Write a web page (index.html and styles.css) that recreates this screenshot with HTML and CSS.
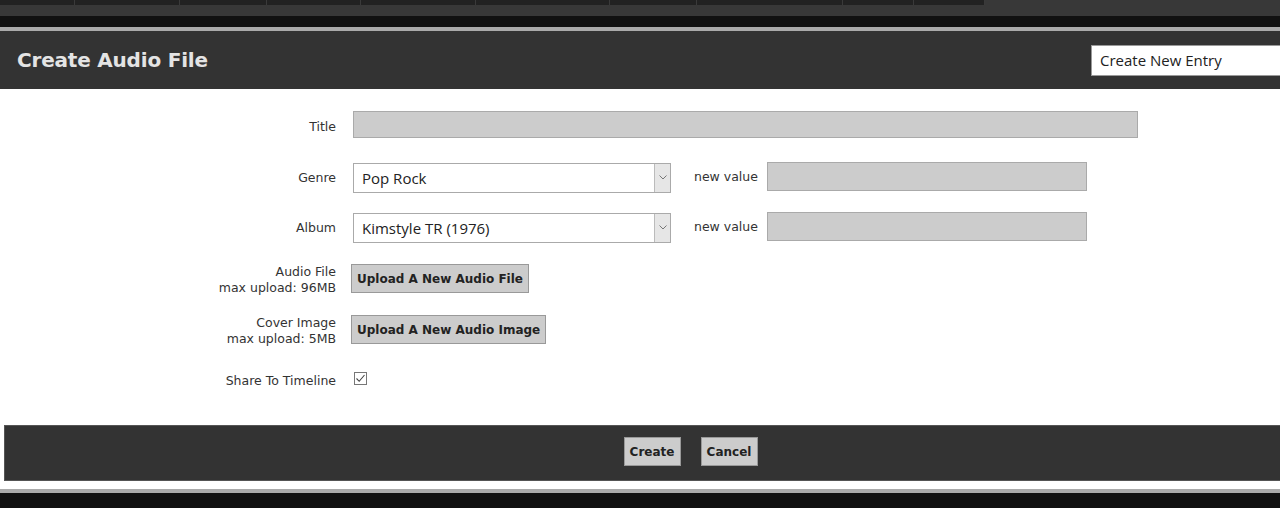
FILE: index.html
```html
<!DOCTYPE html>
<html lang="en">
<head>
    <meta charset="UTF-8">
    <title>Create Audio File</title>
    <link rel="stylesheet" href="styles.css">
</head>
<body>
    <div class="topnav">
        <div class="tabs">
            <span style="width:75px"></span>
            <span style="width:105px"></span>
            <span style="width:87px"></span>
            <span style="width:94px"></span>
            <span style="width:115px"></span>
            <span style="width:134px"></span>
            <span style="width:87px"></span>
            <span style="width:146px"></span>
            <span style="width:71px"></span>
            <span style="width:71px"></span>
        </div>
    </div>
    <div class="blackbar"></div>

    <div class="dialog">
        <div class="dialog-header">
            <h1>Create Audio File</h1>
            <div class="entry-box">Create New Entry</div>
        </div>

        <div class="dialog-body">
            <div class="row row-title">
                <label class="field-label">Title</label>
                <div class="text-input title-input"></div>
            </div>

            <div class="row row-select">
                <label class="field-label">Genre</label>
                <div class="fake-select">
                    <span class="select-value">Pop Rock</span>
                    <span class="select-arrow">
                        <svg width="8" height="5" viewBox="0 0 8 5"><path d="M0.5 0.5 L4 4 L7.5 0.5" fill="none" stroke="#777" stroke-width="1"/></svg>
                    </span>
                </div>
                <span class="new-label">new value</span>
                <div class="text-input new-input"></div>
            </div>

            <div class="row row-select row-album">
                <label class="field-label">Album</label>
                <div class="fake-select">
                    <span class="select-value">Kimstyle TR (1976)</span>
                    <span class="select-arrow">
                        <svg width="8" height="5" viewBox="0 0 8 5"><path d="M0.5 0.5 L4 4 L7.5 0.5" fill="none" stroke="#777" stroke-width="1"/></svg>
                    </span>
                </div>
                <span class="new-label">new value</span>
                <div class="text-input new-input"></div>
            </div>

            <div class="row row-upload">
                <label class="field-label">Audio File<br>max upload: 96MB</label>
                <button class="grey-btn upload-btn">Upload A New Audio File</button>
            </div>

            <div class="row row-upload row-cover">
                <label class="field-label">Cover Image<br>max upload: 5MB</label>
                <button class="grey-btn upload-btn">Upload A New Audio Image</button>
            </div>

            <div class="row row-share">
                <label class="field-label">Share To Timeline</label>
                <svg class="checkbox" width="13" height="13" viewBox="0 0 13 13">
                    <rect x="0.5" y="0.5" width="12" height="12" fill="#fff" stroke="#777"/>
                    <path d="M2.5 6.5 L5.2 9.3 L10.5 3" fill="none" stroke="#444" stroke-width="1.1"/>
                </svg>
            </div>
        </div>

        <div class="dialog-footer">
            <button class="grey-btn">Create</button>
            <button class="grey-btn">Cancel</button>
        </div>
    </div>

    <div class="bottom-line"></div>
</body>
</html>
```

FILE: styles.css
```css
* {
    margin: 0;
    padding: 0;
    box-sizing: border-box;
}

body {
    font-family: 'DejaVu Sans', Verdana, sans-serif;
    background: #111;
    width: 1280px;
    height: 508px;
    overflow: hidden;
}

.topnav {
    height: 16px;
    background: #383838;
}

.tabs {
    display: flex;
    width: 985px;
    height: 5px;
    background: #222;
}

.tabs span {
    height: 5px;
    border-right: 1px solid #3a3a3a;
}

.blackbar {
    height: 11px;
    background: #111;
}

.dialog {
    width: 1376px;
    border-top: 4px solid #aaa;
    background: #fff;
}

.dialog-header {
    display: flex;
    align-items: center;
    height: 58px;
    padding: 0 35px 0 17px;
    background: #333;
}

.dialog-header h1 {
    font-size: 20px;
    font-weight: bold;
    color: #e4e4e4;
    letter-spacing: -0.2px;
}

.entry-box {
    margin-left: auto;
    width: 250px;
    height: 31px;
    padding: 0 8px;
    border: 1px solid #999;
    background: #fff;
    font-family: 'Open Sans', 'Noto Sans', sans-serif;
    font-size: 15px;
    line-height: 29px;
    color: #222;
}

.dialog-body {
    padding: 22px 0 38px;
    background: #fff;
}

.row {
    display: flex;
    align-items: center;
}

.field-label {
    width: 336px;
    margin-right: 17px;
    text-align: right;
    font-size: 12.5px;
    line-height: 16px;
    color: #333;
}

.row-title .field-label {
    padding-top: 5px;
}

.text-input {
    height: 27px;
    background: #ccc;
    border: 1px solid #aaa;
}

.title-input {
    width: 785px;
}

.row-select {
    margin-top: 24px;
    height: 31px;
}

.row-album {
    margin-top: 19px;
}

.fake-select {
    display: flex;
    width: 318px;
    height: 30px;
    border: 1px solid #aaa;
    background: #fff;
}

.select-value {
    flex: 1;
    padding-left: 8px;
    font-family: 'Open Sans', 'Noto Sans', sans-serif;
    font-size: 15px;
    line-height: 28px;
    color: #222;
}

.select-arrow {
    display: flex;
    align-items: center;
    justify-content: center;
    width: 16px;
    background: #e6e6e6;
    border-left: 1px solid #bbb;
}

.new-label {
    margin-left: 23px;
    width: 73px;
    font-size: 12.5px;
    color: #333;
    margin-top: -2px;
}

.new-input {
    width: 320px;
    height: 29px;
    margin-top: -3px;
}

.row-upload {
    margin-top: 21px;
    height: 29px;
}

.row-upload .field-label {
    margin-right: 15px;
    padding-top: 2px;
}

.row-cover {
    margin-top: 22px;
}

.grey-btn {
    height: 29px;
    padding: 0 5px;
    background: #ccc;
    border: 1px solid #999;
    font-family: 'DejaVu Sans', Verdana, sans-serif;
    font-size: 12px;
    font-weight: bold;
    color: #222;
    cursor: pointer;
}

.row-share {
    margin-top: 26px;
    height: 17px;
}

.row-share .field-label {
    padding-top: 4px;
}

.row-share .checkbox {
    margin-left: 1px;
}

.dialog-footer {
    display: flex;
    justify-content: center;
    gap: 20px;
    margin-left: 4px;
    height: 56px;
    padding-top: 11px;
    background: #333;
    border-top: 1px solid #555;
    border-bottom: 1px solid #555;
    border-left: 1px solid #555;
}

.dialog-footer .grey-btn {
    width: 57px;
    padding: 0;
}

.bottom-line {
    height: 12px;
    background: #fff;
    border-bottom: 4px solid #aaa;
}
```
